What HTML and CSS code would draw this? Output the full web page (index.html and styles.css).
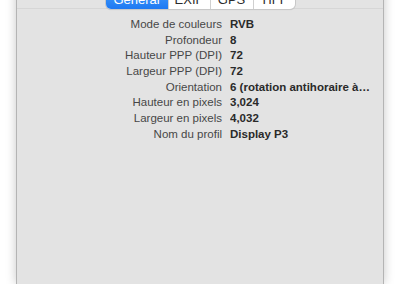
FILE: index.html
```html
<!DOCTYPE html>
<html lang="fr">
<head>
  <meta charset="UTF-8" />
  <meta name="viewport" content="width=device-width, initial-scale=1.0" />
  <title>Inspecteur</title>
  <link rel="stylesheet" href="styles.css">
</head>
<body>
  <div class="window">
    <div class="tabbar">
      <div class="tabs">
        <span class="tab active">Général</span>
        <span class="tab">EXIF</span>
        <span class="tab">GPS</span>
        <span class="tab">TIFF</span>
      </div>
    </div>

    <div class="info">
      <span class="label">Mode de couleurs</span><span class="value">RVB</span>
      <span class="label">Profondeur</span><span class="value">8</span>
      <span class="label">Hauteur PPP (DPI)</span><span class="value">72</span>
      <span class="label">Largeur PPP (DPI)</span><span class="value">72</span>
      <span class="label">Orientation</span><span class="value">6 (rotation antihoraire à…</span>
      <span class="label">Hauteur en pixels</span><span class="value">3,024</span>
      <span class="label">Largeur en pixels</span><span class="value">4,032</span>
      <span class="label">Nom du profil</span><span class="value">Display P3</span>
    </div>
  </div>
</body>
</html>
```

FILE: styles.css
```css
body {
  margin: 0;
  background: #fff;
  overflow: hidden;
  font-family: 'Liberation Sans', Arial, sans-serif;
}
.window {
  margin: -13px 16px 0;
  height: 297px;
  background: #e3e3e3;
  border-left: 1px solid #b4b4b4;
  border-right: 1px solid #b4b4b4;
  box-shadow: 0 0 10px rgba(0, 0, 0, 0.22);
}
.tabbar {
  display: flex;
  justify-content: center;
  border-bottom: 1px solid #d6d6d6;
}
.tabs {
  display: flex;
  height: 22px;
  margin-bottom: -1px;
  border-radius: 5px;
  background: #fff;
  box-shadow: 0 0 0 1px #c8c8c8, 0 1px 1px rgba(0, 0, 0, 0.15);
  overflow: hidden;
}
.tab {
  display: flex;
  align-items: center;
  justify-content: center;
  padding-top: 2px;
  font-size: 13px;
  color: #2b2b2b;
  border-left: 1px solid #d0d0d0;
}
.tab:nth-child(1) { width: 62px; border-left: none; }
.tab:nth-child(2) { width: 41px; }
.tab:nth-child(3) { width: 42px; }
.tab:nth-child(4) { width: 41px; }
.tab.active {
  color: #fff;
  background: linear-gradient(#4aa3fd, #1e79f2);
}
.info {
  display: grid;
  grid-template-columns: 205px 140px;
  grid-auto-rows: 15.7px;
  column-gap: 8px;
  margin-top: 8px;
  font-size: 11.5px;
  line-height: 15.7px;
}
.label {
  text-align: right;
  color: #474747;
  white-space: nowrap;
}
.value {
  font-weight: bold;
  color: #2a2a2a;
  white-space: nowrap;
  overflow: hidden;
  text-overflow: ellipsis;
}
```
